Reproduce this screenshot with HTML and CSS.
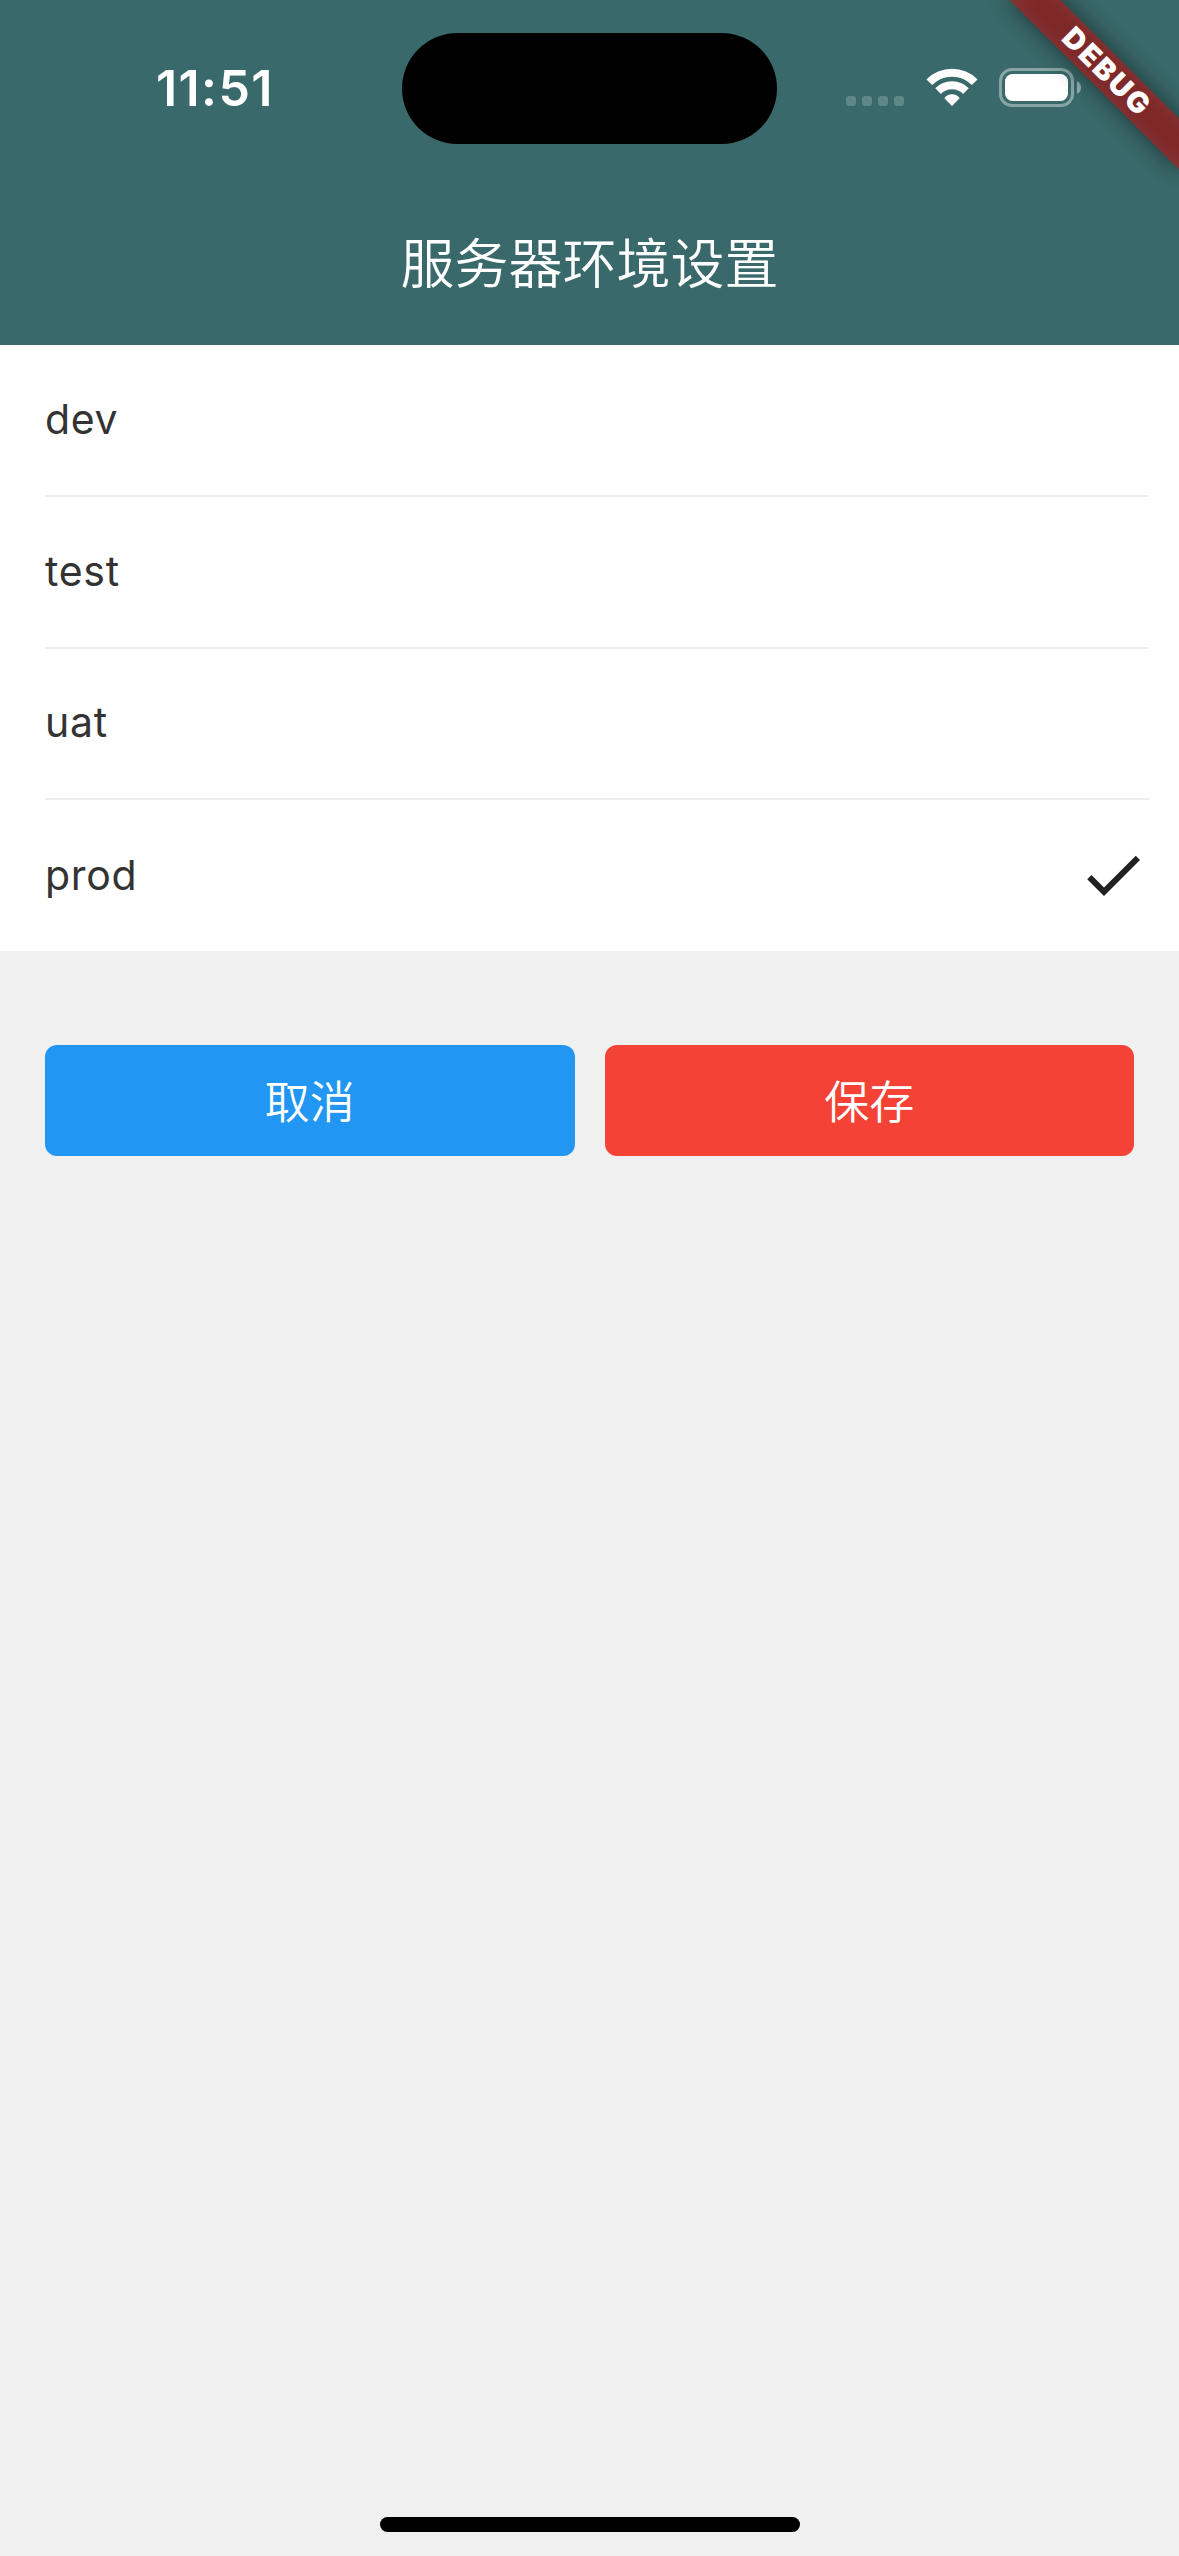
FILE: index.html
```html
<!DOCTYPE html>
<html lang="zh-CN">
<head>
<meta charset="utf-8">
<title>服务器环境设置</title>
<link rel="stylesheet" href="styles.css">
</head>
<body>
<div class="screen">
  <header class="header">
    <div class="status-bar">
      <time class="clock">11:51</time>
      <div class="island"></div>
      <div class="indicators">
        <div class="cellular"><i></i><i></i><i></i><i></i></div>
        <svg class="wifi" viewBox="0 0 52 38" aria-hidden="true">
          <g fill="none" stroke="#fff" stroke-width="8">
            <path d="M3.3 14.2A32 32 0 0 1 48.7 14.2"/>
            <path d="M12.1 23.1A19.6 19.6 0 0 1 39.9 23.1"/>
          </g>
          <path fill="#fff" d="M26 38 18.4 30.3Q21 26.2 26 26.2T33.6 30.3Z"/>
        </svg>
        <svg class="battery" viewBox="0 0 82 39" aria-hidden="true">
          <rect x="1.5" y="1.5" width="72" height="36" rx="11.5" fill="none" stroke="#fff" stroke-opacity=".4" stroke-width="3"/>
          <rect x="6" y="6" width="63" height="27" rx="7.5" fill="#fff"/>
          <path d="M78 13Q82 15 82 19.5T78 26Z" fill="#fff" fill-opacity=".45"/>
        </svg>
      </div>
    </div>
    <h1 class="title">服务器环境设置</h1>
  </header>
  <ul class="list">
    <li class="row"><span>dev</span></li>
    <li class="row"><span>test</span></li>
    <li class="row"><span>uat</span></li>
    <li class="row"><span>prod</span>
      <svg class="check" viewBox="0 0 24 24" aria-hidden="true"><path fill="#222" d="M9 16.17 4.83 12l-1.42 1.41L9 19 21 7l-1.41-1.41z"/></svg>
    </li>
  </ul>
  <div class="actions">
    <button class="button cancel">取消</button>
    <button class="button save">保存</button>
  </div>
  <div class="home-indicator"></div>
  <div class="debug"><div class="ribbon"><span>DEBUG</span></div></div>
</div>
</body>
</html>
```
FILE: styles.css
```css
* { box-sizing: border-box; }

body {
  margin: 0;
  font-family: Inter, "Noto Sans CJK SC", sans-serif;
}

.screen {
  position: relative;
  display: flex;
  flex-direction: column;
  width: 1179px;
  height: 2556px;
  overflow: hidden;
  background: #f0f0f0;
}

.header {
  height: 345px;
  background: #39696a;
  color: #fff;
}

.status-bar {
  display: grid;
  grid-template-columns: 402px 375px 1fr;
  height: 177px;
}

.clock {
  padding: 58px 0 0 156px;
  font-size: 50px;
  line-height: 60px;
  font-weight: 600;
  letter-spacing: 1.4px;
}

.island {
  height: 111px;
  margin-top: 33px;
  border-radius: 56px;
  background: #000;
}

.indicators {
  display: flex;
  align-items: flex-start;
  padding: 68px 0 0 69px;
}

.cellular {
  display: flex;
  gap: 6px;
  margin: 28px 22px 0 0;
}

.cellular i {
  width: 10px;
  height: 10px;
  border-radius: 3.5px;
  background: rgba(255, 255, 255, .2);
}

.wifi {
  width: 52px;
  height: 38px;
  margin-right: 21px;
}

.battery {
  width: 82px;
  height: 39px;
}

.title {
  margin: 0;
  padding-top: 4px;
  font-size: 54px;
  line-height: 168px;
  font-weight: 350;
  text-align: center;
}

.list {
  margin: 0;
  padding: 0 30px 0 45px;
  list-style: none;
  background: #fff;
}

.row {
  display: flex;
  align-items: center;
  justify-content: space-between;
  height: 151.75px;
  padding-bottom: 2px;
  border-bottom: 2px solid #eee;
  color: #333;
  font-size: 41px;
  font-weight: 400;
  letter-spacing: .7px;
}

.row:last-child {
  height: 150.5px;
  padding-bottom: 2px;
  border-bottom: 0;
}

.check {
  width: 72px;
  height: 72px;
}

.actions {
  display: flex;
  gap: 30px;
  padding: 94px 45px 0;
}

.button {
  flex: 1;
  height: 111px;
  padding: 0 0 1px;
  border: 0;
  border-radius: 12px;
  color: #fff;
  font: 350 45px/110px "Noto Sans CJK SC", sans-serif;
}

.cancel { background: #2196f3; }
.save { background: #f44336; }

.home-indicator {
  width: 420px;
  height: 15px;
  margin: auto auto 24px 380px;
  border-radius: 8px;
  background: #000;
}

/* Corner ribbon laid over the header */
.debug {
  position: absolute;
  top: 0;
  right: 0;
  width: 240px;
  height: 240px;
  overflow: hidden;
}

.ribbon {
  position: absolute;
  top: 54px;
  left: 48px;
  width: 240px;
  height: 36px;
  transform: rotate(45deg);
  color: #fff;
  font-size: 29px;
  line-height: 36px;
  font-weight: 900;
  letter-spacing: 2.2px;
  text-align: center;
}

.ribbon::before,
.ribbon::after {
  content: "";
  position: absolute;
  inset: 0;
}

.ribbon::before {
  background: rgba(0, 0, 0, .5);
  filter: blur(12px);
}

.ribbon::after { background: rgba(183, 28, 28, .627); }

.ribbon span {
  position: relative;
  z-index: 1;
}
```
